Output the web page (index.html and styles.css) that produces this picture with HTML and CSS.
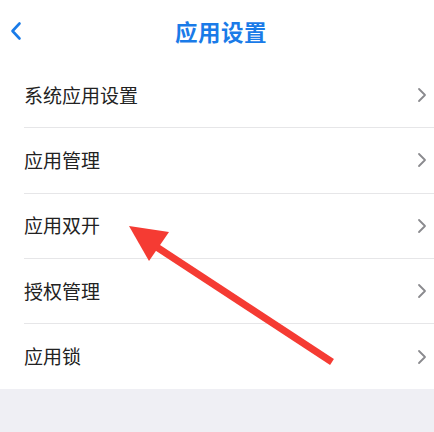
FILE: index.html
```html
<!DOCTYPE html>
<html lang="zh">
<head>
<meta charset="utf-8">
<link rel="stylesheet" href="styles.css">
</head>
<body>
<div class="page">
  <header class="nav">
    <svg class="back" width="14" height="20" viewBox="0 0 14 20"><path d="M10.5 2.5 L3.5 10 L10.5 17.5" fill="none" stroke="#1a7be8" stroke-width="2.6" stroke-linecap="round" stroke-linejoin="round"/></svg>
    <div class="title">应用设置</div>
  </header>
  <ul class="list">
    <li class="row"><span>系统应用设置</span><svg class="chev" width="10" height="16" viewBox="0 0 10 16"><path d="M2 2 L8 8 L2 14" fill="none" stroke="#8a8a8e" stroke-width="1.8" stroke-linecap="round" stroke-linejoin="round"/></svg></li>
    <li class="row"><span>应用管理</span><svg class="chev" width="10" height="16" viewBox="0 0 10 16"><path d="M2 2 L8 8 L2 14" fill="none" stroke="#8a8a8e" stroke-width="1.8" stroke-linecap="round" stroke-linejoin="round"/></svg></li>
    <li class="row"><span>应用双开</span><svg class="chev" width="10" height="16" viewBox="0 0 10 16"><path d="M2 2 L8 8 L2 14" fill="none" stroke="#8a8a8e" stroke-width="1.8" stroke-linecap="round" stroke-linejoin="round"/></svg></li>
    <li class="row"><span>授权管理</span><svg class="chev" width="10" height="16" viewBox="0 0 10 16"><path d="M2 2 L8 8 L2 14" fill="none" stroke="#8a8a8e" stroke-width="1.8" stroke-linecap="round" stroke-linejoin="round"/></svg></li>
    <li class="row last"><span>应用锁</span><svg class="chev" width="10" height="16" viewBox="0 0 10 16"><path d="M2 2 L8 8 L2 14" fill="none" stroke="#8a8a8e" stroke-width="1.8" stroke-linecap="round" stroke-linejoin="round"/></svg></li>
  </ul>
  <div class="footer"></div>
  <svg class="arrow" width="434" height="432" viewBox="0 0 434 432">
    <line x1="332" y1="362" x2="152" y2="244" stroke="#f53b33" stroke-width="7"/>
    <polygon points="129,226 169,232 149,261" fill="#f53b33"/>
  </svg>
</div>
</body>
</html>
```
FILE: styles.css
```css
* { box-sizing: border-box; }
html, body { margin: 0; padding: 0; background: #fff; }
.page {
  position: relative;
  width: 434px;
  height: 432px;
  overflow: hidden;
  font-family: "Noto Sans CJK SC", "Noto Sans", sans-serif;
  display: flex;
  flex-direction: column;
}
.nav {
  position: relative;
  height: 63px;
  display: flex;
  align-items: center;
  justify-content: center;
}
.back {
  position: absolute;
  left: 9px;
  top: 21px;
}
.title {
  font-size: 22.5px;
  font-weight: 700;
  color: #1a7be8;
  margin-top: -1px;
  margin-left: 8px;
  letter-spacing: 0.5px;
}
.list {
  list-style: none;
  margin: 0;
  padding: 0 0 0 24px;
}
.row {
  height: 65.3px;
  display: flex;
  align-items: center;
  justify-content: space-between;
  padding-right: 7px;
  border-bottom: 1px solid #e6e6e8;
  font-size: 19px;
  color: #222;
}
.row span { margin-top: -2px; }
.row.last { border-bottom: none; }
.footer {
  flex: 1;
  background: #efeff4;
}
.arrow {
  position: absolute;
  left: 0;
  top: 0;
  pointer-events: none;
}
```
